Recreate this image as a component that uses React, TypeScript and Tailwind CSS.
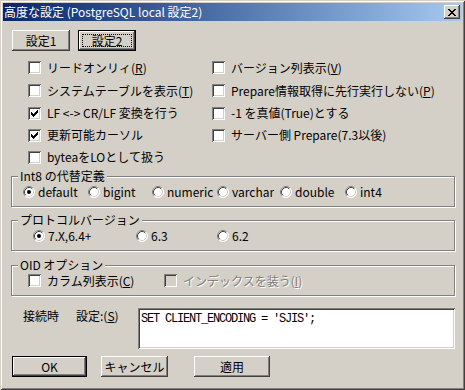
import React from 'react';

const raised =
  'shadow-[inset_-1px_-1px_#404040,inset_1px_1px_#ffffff,inset_-2px_-2px_#808080,inset_2px_2px_#d4d0c8]';
const sunken =
  'shadow-[inset_1px_1px_#808080,inset_-1px_-1px_#ffffff,inset_2px_2px_#404040,inset_-2px_-2px_#d4d0c8]';

// pixel glyphs: check mark and close cross
const CHECK = ['......X', '.....XX', 'X...XXX', 'XX.XXX.', 'XXXXX..', '.XXX...', '..X....'];
const CROSS = ['XX....XX', '.XX..XX.', '..XXXX..', '...XX...', '..XXXX..', '.XX..XX.', 'XX....XX'];

const Pixels: React.FC<{ rows: string[]; color?: string }> = ({ rows, color = '#000' }) => (
  <svg width={rows[0].length} height={rows.length} shapeRendering="crispEdges">
    {rows.map((r, y) =>
      r.split('').map((c, x) => (c === 'X' ? <rect key={`${x}-${y}`} x={x} y={y} width="1" height="1" fill={color} /> : null))
    )}
  </svg>
);

const Check: React.FC<{ checked?: boolean; disabled?: boolean }> = ({ checked, disabled }) => (
  <span
    className={`w-[13px] h-[13px] shrink-0 flex items-center justify-center ${sunken} ${
      disabled ? 'bg-[#d4d0c8]' : 'bg-white'
    }`}
  >
    {checked && <Pixels rows={CHECK} />}
  </span>
);

const Radio: React.FC<{ on?: boolean }> = ({ on }) => (
  <svg width="12" height="12" viewBox="0 0 12 12" className="shrink-0">
    <circle cx="6" cy="6" r="5.5" fill="#fff" />
    <path d="M2.11 9.89 A5.5 5.5 0 0 1 9.89 2.11" stroke="#808080" fill="none" />
    <path d="M9.89 2.11 A5.5 5.5 0 0 1 2.11 9.89" stroke="#ffffff" fill="none" />
    <path d="M2.82 9.18 A4.5 4.5 0 0 1 9.18 2.82" stroke="#404040" fill="none" />
    <path d="M9.18 2.82 A4.5 4.5 0 0 1 2.82 9.18" stroke="#d4d0c8" fill="none" />
    {on && <circle cx="6" cy="6" r="2" fill="#000" />}
  </svg>
);

const CheckRow: React.FC<{ checked?: boolean; disabled?: boolean; h?: string; children: React.ReactNode }> = ({
  checked,
  disabled,
  h = 'h-[22px]',
  children,
}) => (
  <div className={`flex items-center gap-[6px] ${h}`}>
    <Check checked={checked} disabled={disabled} />
    <span className={disabled ? 'text-[#808080] [text-shadow:1px_1px_0_#fff] whitespace-nowrap' : 'whitespace-nowrap'}>
      {children}
    </span>
  </div>
);

const RadioItem: React.FC<{ on?: boolean; w: string; label: string }> = ({ on, w, label }) => (
  <div className={`flex items-center gap-[3px] ${w}`}>
    <Radio on={on} />
    <span className="whitespace-nowrap">{label}</span>
  </div>
);

const Group: React.FC<{ title: string; children: React.ReactNode; className?: string }> = ({
  title,
  children,
  className = '',
}) => (
  <div
    className={`relative h-[31px] border border-[#808080] shadow-[inset_1px_1px_#ffffff,1px_1px_#ffffff] flex items-center ${className}`}
  >
    <span className="absolute left-[6px] top-[-8px] bg-[#d4d0c8] px-[2px] leading-[14px]">{title}</span>
    {children}
  </div>
);

const Btn: React.FC<{ w: string; def?: boolean; focus?: boolean; children: React.ReactNode }> = ({
  w,
  def,
  focus,
  children,
}) => (
  <div
    className={`relative h-[21px] ${w} flex items-center justify-center bg-[#d4d0c8] ${raised} ${
      def ? 'border border-black' : ''
    }`}
  >
    {focus && <span className="absolute inset-[3px] border border-dotted border-black" />}
    <span className="leading-[14px]">{children}</span>
  </div>
);

const App: React.FC = () => {
  return (
    <div className="w-[465px] h-[390px] bg-[#d4d0c8] p-[3px] text-[12px] leading-[14px] text-black font-['Noto_Sans_CJK_JP',sans-serif] shadow-[inset_1px_1px_#d4d0c8,inset_-1px_-1px_#404040,inset_2px_2px_#ffffff,inset_-2px_-2px_#808080]">
      {/* Title bar */}
      <div className="h-[18px] bg-linear-to-r from-[#0a246a] to-[#a6caf0] flex items-center justify-between pl-[1px] pr-[2px]">
        <span className="text-white whitespace-nowrap">高度な設定 (PostgreSQL local 設定2)</span>
        <div className={`w-[16px] h-[14px] bg-[#d4d0c8] flex items-center justify-center ${raised}`}>
          <Pixels rows={CROSS} />
        </div>
      </div>

      <div className="pl-[8px] pr-[5px]">
        {/* Page buttons */}
        <div className="flex gap-[8px] pl-[1px] mt-[9px]">
          <Btn w="w-[58px]">設定1</Btn>
          <Btn w="w-[58px]" def focus>
            設定2
          </Btn>
        </div>

        {/* Option checkboxes */}
        <div className="flex mt-[5px]">
          <div className="w-[200px] pl-[17px]">
            <CheckRow h="h-[23px]">
              リードオンリィ(<u>R</u>)
            </CheckRow>
            <CheckRow h="h-[23px]">
              システムテーブルを表示(<u>T</u>)
            </CheckRow>
            <CheckRow checked>LF &lt;-&gt; CR/LF 変換を行う</CheckRow>
            <CheckRow checked>更新可能カーソル</CheckRow>
            <CheckRow>byteaをLOとして扱う</CheckRow>
          </div>
          <div className="pl-[1px]">
            <CheckRow h="h-[23px]">
              バージョン列表示(<u>V</u>)
            </CheckRow>
            <CheckRow h="h-[23px]">
              Prepare情報取得に先行実行しない(<u>P</u>)
            </CheckRow>
            <CheckRow>-1 を真値(True)とする</CheckRow>
            <CheckRow>サーバー側 Prepare(7.3以後)</CheckRow>
          </div>
        </div>

        {/* Int8 */}
        <Group title="Int8 の代替定義" className="mt-[8px] w-[444px] pl-[11px]">
          <RadioItem on w="w-[65px]" label="default" />
          <RadioItem w="w-[64px]" label="bigint" />
          <RadioItem w="w-[65px]" label="numeric" />
          <RadioItem w="w-[63px]" label="varchar" />
          <RadioItem w="w-[65px]" label="double" />
          <RadioItem w="w-[60px]" label="int4" />
        </Group>

        {/* Protocol */}
        <Group title="プロトコルバージョン" className="mt-[13px] w-[444px] pl-[21px]">
          <RadioItem on w="w-[103px]" label="7.X,6.4+" />
          <RadioItem w="w-[81px]" label="6.3" />
          <RadioItem w="w-[60px]" label="6.2" />
        </Group>

        {/* OID */}
        <Group title="OID オプション" className="mt-[14px] w-[444px] pl-[16px]">
          <div className="w-[136px]">
            <CheckRow>
              カラム列表示(<u>C</u>)
            </CheckRow>
          </div>
          <CheckRow disabled>
            インデックスを装う(<u>I</u>)
          </CheckRow>
        </Group>

        {/* Connect settings */}
        <div className="flex mt-[12px]">
          <div className="w-[127px] pl-[12px] pt-[1px] flex">
            <span className="w-[53px]">接続時</span>
            <span>
              設定:(<u>S</u>)
            </span>
          </div>
          <div className={`w-[317px] h-[41px] bg-white pl-[3px] pt-[2px] ${sunken}`}>
            <span className="font-['Liberation_Mono',monospace] tracking-[-1.2px] whitespace-nowrap">
              SET CLIENT_ENCODING = 'SJIS';
            </span>
          </div>
        </div>

        {/* Bottom buttons */}
        <div className="flex mt-[7px] pl-[1px]">
          <Btn w="w-[75px]" def>
            OK
          </Btn>
          <div className="w-[14px]" />
          <Btn w="w-[67px]">キャンセル</Btn>
          <div className="w-[26px]" />
          <Btn w="w-[76px]">適用</Btn>
        </div>
      </div>
    </div>
  );
};

export default App;
